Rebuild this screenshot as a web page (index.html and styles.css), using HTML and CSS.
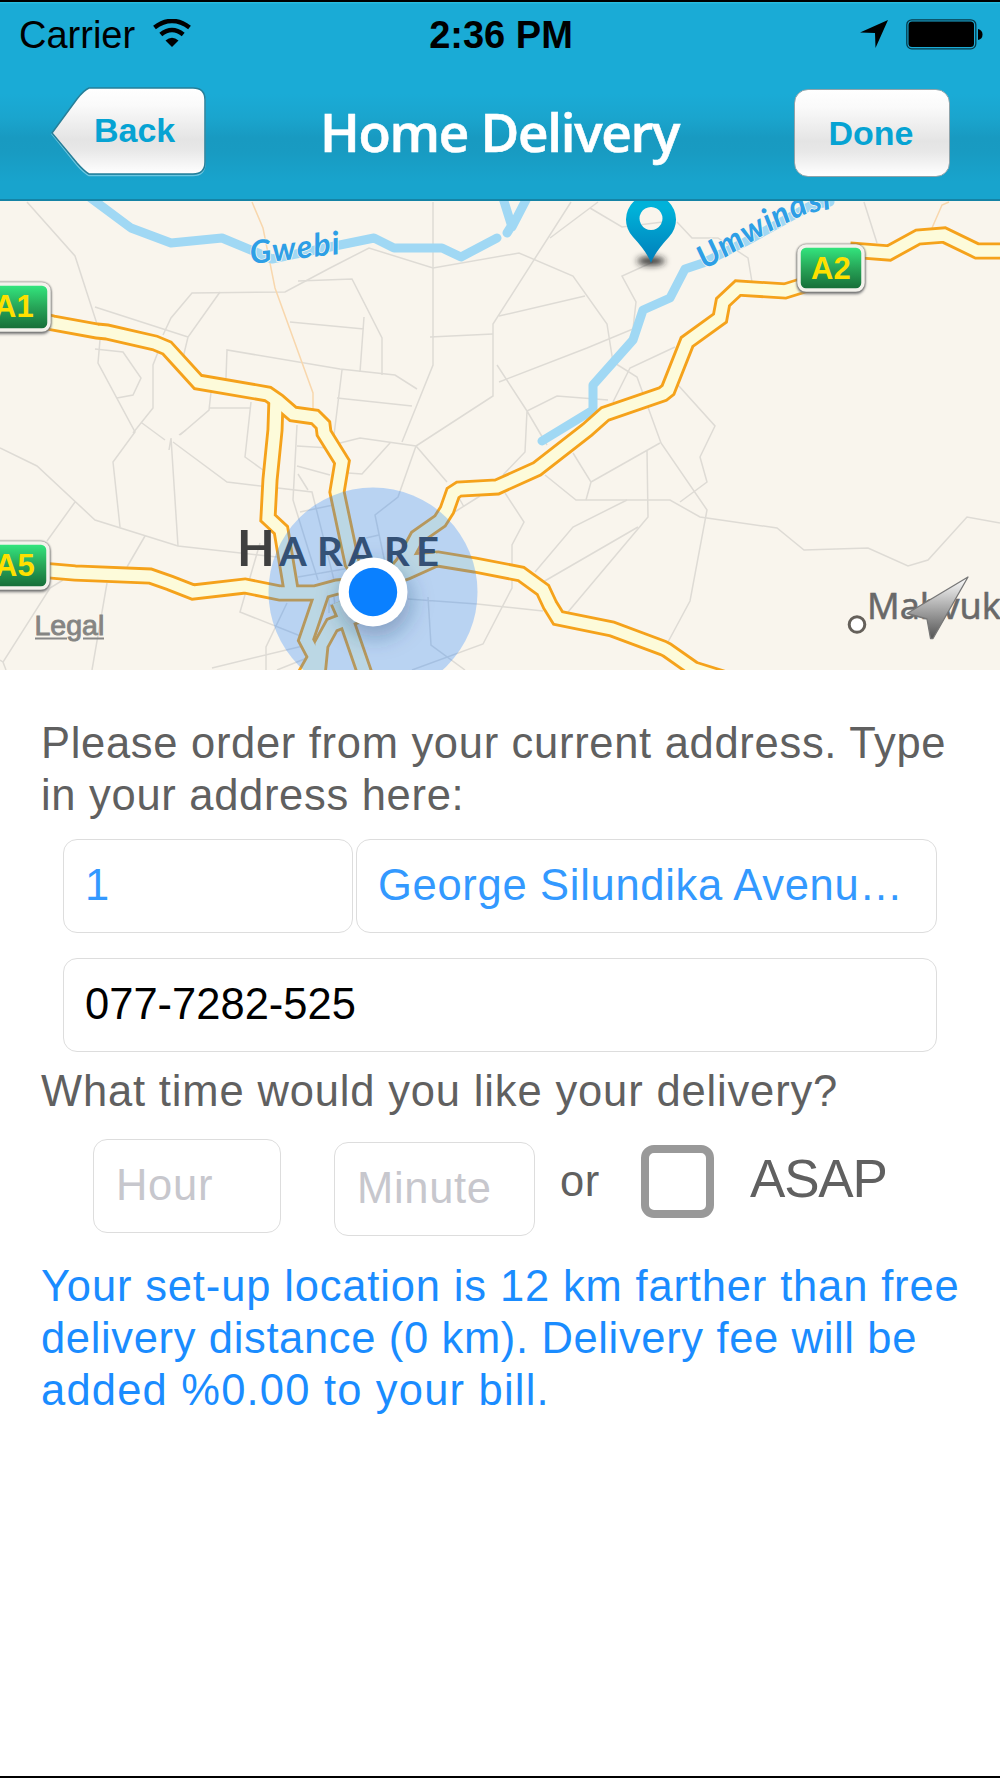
FILE: index.html
```html
<!DOCTYPE html>
<html lang="en">
<head>
    <meta charset="UTF-8">
    <meta name="viewport" content="width=device-width, initial-scale=1.0">
    <title>Home Delivery</title>
    <link rel="stylesheet" href="styles.css">
</head>
<body>
    <div class="screen">
        <header class="header">
            <div class="status-bar">
                <div class="carrier">
                    <span>Carrier</span>
                    <svg class="wifi" width="38" height="28" viewBox="0 0 38 28">
                        <path d="M1.5 8.5 Q19 -4.500 36.500 8.500" fill="none" stroke="#000" stroke-width="4.600"/>
                        <path d="M7.800 15.500 Q19 6.500 30.200 15.500" fill="none" stroke="#000" stroke-width="4.600"/>
                        <path d="M12.500 21.500 Q19 16 25.500 21.500 L19 28 Z"/>
                    </svg>
                </div>
                <div class="clock">2:36 PM</div>
                <div class="indicators">
                    <svg width="28" height="28" viewBox="0 0 28 28">
                        <path d="M28 0 L0 12.500 L15 13 L15.500 28 Z"/>
                    </svg>
                    <svg width="77" height="31" viewBox="0 0 77 31">
                        <rect x="0.800" y="0.800" width="69" height="29" rx="5" fill="none" stroke="#073a4a" stroke-width="1.300"/>
                        <rect x="2.500" y="2.500" width="65.500" height="25.500" rx="3.500"/>
                        <path d="M72 10 Q76.500 11 76.500 15.500 Q76.500 20 72 21 Z"/>
                    </svg>
                </div>
            </div>
            <nav class="nav">
                <a class="back">
                    <svg class="back-shape" width="157" height="90" viewBox="0 0 157 90">
                        <defs>
                            <linearGradient id="btn" x1="0" y1="0" x2="0" y2="1">
                                <stop offset="0" stop-color="#fff"/>
                                <stop offset="0.200" stop-color="#fafafa"/>
                                <stop offset="0.600" stop-color="#e4e4e4"/>
                                <stop offset="0.720" stop-color="#e8e8e8"/>
                                <stop offset="1" stop-color="#fff"/>
                            </linearGradient>
                        </defs>
                        <path d="M39 2.500 H143 Q155 2.500 155 15 V76 Q155 88.500 143 88.500 H39 Q34 86 27 78 L2 47 L27 13 Q34 3 39 2.500 Z" fill="none" stroke="#6cc6e0" stroke-width="1.500"/>
                        <path d="M39 1 H143 Q155 1 155 13 V75 Q155 87 143 87 H39 Q34 84 27 76 L2 46 L27 12 Q34 3 39 1 Z" fill="url(#btn)" stroke="#267f99" stroke-width="1.500"/>
                    </svg>
                    <span>Back</span>
                </a>
                <h1>Home Delivery</h1>
                <button class="done">Done</button>
            </nav>
        </header>

        <svg class="map" width="1000" height="469" viewBox="0 201 1000 469">
            <defs>
                <linearGradient id="shield" x1="0" y1="0" x2="0" y2="1">
                    <stop offset="0" stop-color="#34ea80"/>
                    <stop offset="0.500" stop-color="#27a558"/>
                    <stop offset="1" stop-color="#166b36"/>
                </linearGradient>
                <linearGradient id="pin" x1="0" y1="0" x2="0" y2="1">
                    <stop offset="0.200" stop-color="#00b2d9"/>
                    <stop offset="1" stop-color="#007db9"/>
                </linearGradient>
                <linearGradient id="locate" x1="0" y1="0" x2="0" y2="1">
                    <stop offset="0" stop-color="#fff"/>
                    <stop offset="0.500" stop-color="#aaa"/>
                    <stop offset="1" stop-color="#555"/>
                </linearGradient>
                <filter id="soft" x="-50%" y="-100%" width="200%" height="300%">
                    <feGaussianBlur stdDeviation="3"/>
                </filter>
                <filter id="glow" x="-60%" y="-60%" width="220%" height="220%">
                    <feGaussianBlur stdDeviation="11"/>
                </filter>
                <path id="umwindsi" d="M705 270 Q765 232 806 214 L860 203"/>
                <g id="roads">
                    <path d="M40 320 L53 323 L97 331 L107 332 L155 343 L167 348 L198 382 L268 394 L278 401 L293 414 L315 417 L323 425 L324 433 L342 462 L337 492 L352 563 L373 592"/>
                    <path d="M276 400 L275 430 L270 480 L268 518 L281 530 L291 590"/>
                    <path d="M40 570 L75 573 L150 576 L170 583 L193 592 L245 586 L280 593 L315 593 L337 587 L373 584 L407 572 L438 558"/>
                    <path d="M400 562 L438 559 L475 565 L521 574 L543 590 L550 605 L558 618 L612 629 L663 648 L667 650 L694 669 L723 678"/>
                    <path d="M385 585 L403 563 L417 537 L440 521 L447 510 L453 493 L459 489 L497 487 L537 469 L587 430 L605 414 L663 394 L668 390 L687 342 L720 318 L723 302 L738 288 L785 291 L830 277"/>
                    <path d="M850 250 L889 253 L918 237 L944 235 L977 251 L1005 251"/>
                    <path d="M322 593 L306 640 L315 657 L302 680"/>
                    <path d="M373 610 L345 620 L332 625 L321 645 L318 675"/>
                    <path d="M338 602 L348 625 L367 680"/>
                </g>
            </defs>

            <rect x="0" y="201" width="1000" height="469" fill="#f9f5ed"/>

            <!-- minor roads -->
            <g class="minor">
                <path d="M27 202 L75 256 L97 324 M100 340 L98 363 L135 432 L113 462 L120 527"/>
                <path d="M95 349 L123 352 L141 378 L133 395 L117 398"/>
                <path d="M95 307 L188 337 M220 292 L188 337 L182 362"/>
                <path d="M163 335 L171 318 L192 293 L285 292 L330 268 L369 248 L433 268 L519 253 L573 276 L607 324 L613 362 L637 377 L657 432 L661 443 L707 510 L690 601 L668 642"/>
                <path d="M298 281 L352 279 L382 338 L382 375 M290 322 L364 329 M364 317 L360 372"/>
                <path d="M226 378 L227 350 L340 369 L395 375 L417 389 M342 370 L334 435 M337 398 L412 406"/>
                <path d="M158 352 L153 365 L153 408 L133 433 M142 423 L165 440 M179 435 L186 430"/>
                <path d="M211 392 L209 410 L180 435 M209 408 L250 408 M251 402 L245 457 L263 470"/>
                <path d="M297 425 L293 500 L310 555 L318 580 M297 446 L330 448 M297 466 L330 475 M298 474 L308 490"/>
                <path d="M0 448 L37 466 L95 520 L178 546 L277 557 M75 502 L47 541 M145 536 L127 567"/>
                <path d="M169 450 L171 438 L178 546 M173 442 L227 482 L312 492 L334 580"/>
                <path d="M63 580 L50 588 L3 662 L6 670 M0 660 L3 662 M107 583 L92 670"/>
                <path d="M260 543 L240 612 L303 637 M287 603 L266 647 L266 670 M212 668 L307 645 M277 670 L307 658"/>
                <path d="M433 202 L433 365 L402 442 M571 202 L493 324 L493 396 L416 446"/>
                <path d="M340 443 L360 438 L416 446 L447 482 M416 446 L398 497 L375 515 L385 563 M348 473 L362 474 L390 443"/>
                <path d="M499 316 L585 296 M430 337 L493 334 M499 382 L587 348 L633 329 L636 302 L622 276 L653 262"/>
                <path d="M497 365 L527 411 L547 445 M503 475 L525 452 L527 411 L557 396 L608 400"/>
                <path d="M613 402 L630 368 L675 347 M550 238 L598 202 M590 208 L622 227 L663 222"/>
                <path d="M677 222 L692 238 L718 238 L748 258 L752 282 M864 202 L877 243"/>
                <path d="M678 385 L715 426 L700 457 L707 482 L680 502"/>
                <path d="M573 453 L591 482 L586 500 M591 482 L660 443 M647 450 L648 517 L568 612"/>
                <path d="M545 475 L576 500 L670 500 L700 517 L777 528 L804 550 L868 548 L908 566 L928 560 L967 517 L1000 523"/>
                <path d="M627 500 L573 527 L535 572 M638 527 L543 582 M480 496 L453 513 M459 498 L464 507"/>
                <path d="M505 493 L524 522 L512 545 L512 588 L483 644 L412 670"/>
                <path d="M408 599 L477 604 L543 611 M428 597 L431 645 L465 670"/>
                <path d="M300 512 L338 504 M298 577 L350 568 M366 538 L379 535"/>
                <path d="M329 598 L329 613 M334 597 L336 614 M329 605 L342 603"/>
            </g>
            <path class="trail" d="M252 202 L263 228 L275 288 L313 393 L313 410 M949 202 L942 205 L932 228"/>

            <!-- rivers -->
            <g class="river">
                <path d="M88 196 L131 228 L171 243 L222 238 L258 253 L272 259 L330 247 L374 238 L394 248 L442 248 L461 257 L497 238"/>
                <path d="M503 198 L512 227 L527 198 M512 225 L507 233"/>
                <path d="M830 202 L812 205 L745 242 L703 263 L685 269 L670 298 L643 310 L633 340 L593 385 L593 410 L542 441"/>
            </g>

            <!-- main roads: casing below, fill above -->
            <use href="#roads" class="casing"/>
            <use href="#roads" class="fill"/>

            <text class="river-name" x="251" y="264" transform="rotate(-6.500 251 264)">Gwebi</text>
            <text class="river-name"><textPath href="#umwindsi">Umwindsi</textPath></text>

            <!-- road shields -->
            <g class="shield">
                <rect x="-20" y="284" width="69" height="46" rx="7"/>
                <text x="-6" y="317">A1</text>
                <rect x="-20" y="543" width="68" height="45" rx="7"/>
                <text x="-5" y="576">A5</text>
                <rect x="799" y="246" width="64" height="44" rx="7"/>
                <text x="811" y="279">A2</text>
            </g>

            <text class="city" x="237" y="565.500" font-size="49">H</text>
            <text class="city" x="279 317 348 384 416" y="565.500" font-size="40">ARARE</text>

            <!-- current location -->
            <circle cx="373" cy="592" r="104.500" fill="#1a80ff" fill-opacity="0.290"/>
            <circle cx="375" cy="601" r="36" fill="#123a66" fill-opacity="0.350" filter="url(#glow)"/>
            <circle cx="373" cy="592" r="34.500" fill="#fff"/>
            <circle cx="373" cy="592" r="24.200" fill="#0a80ff"/>

            <!-- delivery pin -->
            <ellipse cx="651" cy="261" rx="14" ry="4.500" fill="#222" fill-opacity="0.850" filter="url(#soft)"/>
            <path fill="url(#pin)" fill-rule="evenodd" d="M651 263 Q647 252 633 237 A25 25 0 1 1 669 237 Q655 252 651 263 Z M651 207 a11.500 11.500 0 1 0 0.010 0 Z"/>

            <circle cx="857" cy="624.500" r="7.800" fill="#fff" stroke="#65605a" stroke-width="3"/>
            <text class="suburb" x="867" y="618.500">Mabvuku</text>
            <path d="M968 577 L907 613.500 L927 619 L930.500 638.500 L933 638.500 L968 577 Z" fill="url(#locate)" stroke="#777" stroke-width="1.300" stroke-linejoin="round"/>

            <text class="legal" x="34.500" y="635">Legal</text>
            <path d="M35 638.500 H67 M83 638.500 H104" stroke="#888" stroke-width="1.800"/>
        </svg>

        <form class="form">
            <p class="note intro">Please order from your current address. Type in your address here:</p>
            <div class="address-row">
                <input class="field number" type="text" value="1">
                <input class="field street" type="text" value="George Silundika Avenu…">
            </div>
            <input class="field phone" type="text" value="077-7282-525">
            <p class="note question">What time would you like your delivery?</p>
            <div class="time-row">
                <input class="field hour" type="text" placeholder="Hour">
                <input class="field minute" type="text" placeholder="Minute">
                <span class="or">or</span>
                <span class="checkbox"></span>
                <span class="asap">ASAP</span>
            </div>
            <p class="note fee">Your set-up location is 12 km farther than free <span class="tight">delivery distance (0 km). Delivery fee will be</span> <span class="wide">added %0.00 to your bill.</span></p>
        </form>
    </div>
</body>
</html>
```
FILE: styles.css
```css
* {
    box-sizing: border-box;
}
body {
    margin: 0;
    background: #fff;
    font-family: "Liberation Sans", Arial, sans-serif;
}
.screen {
    width: 1000px;
    height: 1778px;
    overflow: hidden;
    border-bottom: 2px solid #000;
}

/* header */
.header {
    height: 201px;
    border-top: 2px solid #000;
    border-bottom: 2px solid #1583a5;
    background: linear-gradient(#2cc3e4 0, #1aabd6 2px, #1aabd6 92px, #1aa5ce 115px, #189ac1 136px, #189bc2 150px, #18a4cd 180px, #18a4cd 100%);
}
.status-bar {
    display: grid;
    grid-template-columns: 1fr auto 1fr;
    align-items: center;
    height: 65px;
    padding: 0 17px 0 19px;
    font-size: 38px;
}
.carrier {
    display: flex;
    align-items: center;
    gap: 18px;
    margin-top: 1px;
}
.wifi {
    margin-bottom: 5px;
}
.clock {
    margin-top: 1px;
    font-size: 38px;
    font-weight: bold;
}
.indicators {
    display: flex;
    justify-content: flex-end;
    align-items: center;
    gap: 18px;
    margin-bottom: 1px;
}
.nav {
    display: flex;
    justify-content: space-between;
    padding: 20px 50px 0 50px;
}
.back {
    display: grid;
    color: #06a3d3;
    font-size: 34px;
    font-weight: bold;
}
.back-shape,
.back span {
    grid-area: 1 / 1;
}
.back span {
    padding: 24px 0 0 44px;
    line-height: 38px;
}
.nav h1 {
    margin: 8px 2px 0 0;
    font-family: "Open Sans", "Noto Sans", sans-serif;
    font-size: 53px;
    font-weight: 600;
    line-height: 74px;
    letter-spacing: -1.3px;
    color: #fff;
    -webkit-text-stroke: 0.6px #fff;
}
.done {
    width: 156px;
    height: 88px;
    margin-top: 2px;
    padding: 0 2px 0 0;
    border: 1.5px solid #8fa3aa;
    border-radius: 14px;
    background: linear-gradient(#fff, #fafafa 20%, #e4e4e4 60%, #e8e8e8 72%, #fff);
    color: #06a3d3;
    font-family: inherit;
    font-size: 34px;
    font-weight: bold;
}

/* map */
.map {
    display: block;
}
.minor {
    fill: none;
    stroke: #dedbd5;
    stroke-width: 1.5;
}
.trail {
    fill: none;
    stroke: #f8d7ad;
    stroke-width: 1.5;
}
.river {
    fill: none;
    stroke: #a0d8f4;
    stroke-width: 9;
    stroke-linecap: round;
    stroke-linejoin: round;
}
.casing,
.fill {
    fill: none;
    stroke-linejoin: miter;
}
.casing {
    stroke: #f5a21b;
    stroke-width: 17;
}
.fill {
    stroke: #fdfbda;
    stroke-width: 11.3;
}
.river-name {
    fill: #2e9fe6;
    stroke: #f9f5ed;
    stroke-width: 1.5;
    paint-order: stroke;
    font-family: Lato, sans-serif;
    font-size: 32px;
    font-weight: bold;
    font-style: italic;
    letter-spacing: 1.2px;
}
.shield rect {
    fill: url(#shield);
    stroke: #f4f2ec;
    stroke-width: 3.5;
    filter: drop-shadow(0 0 1px #555) drop-shadow(0 2px 1px #888);
}
.shield text {
    fill: #ffe000;
    font-size: 31px;
    font-weight: bold;
}
.city {
    fill: #3f3f3f;
    font-family: Lato, sans-serif;
    font-weight: bold;
}
.suburb {
    fill: #696969;
    stroke: #696969;
    stroke-width: 0.5;
    font-family: "Noto Sans", sans-serif;
    font-size: 36px;
}
.legal {
    fill: #858583;
    stroke: #858583;
    stroke-width: 0.9;
    font-size: 28.5px;
}

/* form */
.form {
    padding: 47px 30px 0 41px;
}
.note {
    margin: 0;
    color: #606060;
    font-size: 43.5px;
    line-height: 52.3px;
    letter-spacing: 0.85px;
}
.intro {
    letter-spacing: 0.7px;
}
.field {
    height: 94px;
    padding: 0 22px 1px 21px;
    border: 1.5px solid #ddd;
    border-radius: 14px;
    background: #fff;
    color: #3399ff;
    font-family: inherit;
    font-size: 43.5px;
    letter-spacing: 0.7px;
}
.field::placeholder {
    color: #c7c7cd;
}
.address-row {
    display: flex;
    gap: 3px;
    margin: 17px 0 0 22px;
}
.number {
    width: 290px;
}
.street {
    width: 581px;
}
.phone {
    display: block;
    width: 874px;
    margin: 25px 0 0 22px;
    color: #000;
    letter-spacing: 0;
}
.question {
    margin-top: 13px;
}
.time-row {
    display: flex;
    align-items: flex-start;
    margin: 22px 0 0 52px;
}
.hour,
.minute {
    padding-left: 22px;
}
.hour {
    width: 188px;
}
.minute {
    width: 201px;
    margin: 3px 0 0 53px;
}
.or,
.asap {
    color: #606060;
    font-size: 43.5px;
    line-height: 52px;
}
.or {
    width: 81px;
    margin: 16px 0 0 25px;
    letter-spacing: 0.5px;
}
.checkbox {
    width: 73px;
    height: 73px;
    margin-top: 6px;
    border: 8px solid #999;
    border-radius: 13px;
}
.asap {
    margin: 10px 0 0 36px;
    font-size: 53px;
    line-height: 60px;
    letter-spacing: -1.2px;
}
.fee {
    margin-top: 24px;
    color: #1a8cff;
}
.tight {
    letter-spacing: 0.65px;
}
.wide {
    letter-spacing: 1.2px;
}
```
